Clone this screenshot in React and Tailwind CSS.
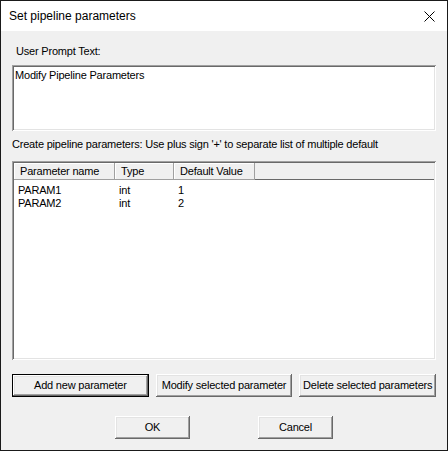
import React from 'react';

const raised =
    'shadow-[inset_-1px_-1px_#696969,inset_1px_1px_#ffffff,inset_-2px_-2px_#a0a0a0,inset_2px_2px_#e3e3e3]';
const sunken =
    'shadow-[inset_1px_1px_#a0a0a0,inset_-1px_-1px_#ffffff,inset_2px_2px_#696969,inset_-2px_-2px_#e3e3e3]';

const Button = ({ children, isDefault, className = '' }) => (
    <div className={`h-[23px] flex items-center justify-center bg-[#f0f0f0] ${className}`}>
        <div
            className={`w-full h-full flex items-center justify-center ${
                isDefault
                    ? 'shadow-[inset_0_0_0_1px_#000000,inset_-2px_-2px_#696969,inset_2px_2px_#ffffff,inset_-3px_-3px_#a0a0a0,inset_3px_3px_#e3e3e3]'
                    : raised
            }`}
        >
            {children}
        </div>
    </div>
);

const columns = [
    { label: 'Parameter name', w: 'w-[101px]' },
    { label: 'Type', w: 'w-[59px]' },
    { label: 'Default Value', w: 'w-[81px]' },
];

const rows = [
    ['PARAM1', 'int', '1'],
    ['PARAM2', 'int', '2'],
];

export default function App() {
    return (
        <div className="w-[448px] h-[451px] border border-[#1a1a1a] bg-[#f0f0f0] flex flex-col font-['Liberation_Sans',Arial,sans-serif] text-[11px] leading-[13px] tracking-[-0.2px] text-black">
            {/* Title bar */}
            <div className="h-[30px] shrink-0 bg-white flex items-center justify-between pl-[8px] pr-[12px] text-[12px] tracking-normal">
                <span>Set pipeline parameters</span>
                <svg width="11" height="11" viewBox="0 0 11 11">
                    <path d="M0.5 0.5 L10.5 10.5 M10.5 0.5 L0.5 10.5" stroke="#000" strokeWidth="1" />
                </svg>
            </div>

            <div className="flex-1 flex flex-col px-[11px]">
                <div className="pt-[14px] pl-[4px] h-[34px]">User Prompt Text:</div>
                <div className={`h-[66px] bg-white pl-[3px] pt-[4px] ${sunken}`}>Modify Pipeline Parameters</div>

                <div className="mt-[7px] whitespace-nowrap">
                    Create pipeline parameters: Use plus sign '+' to separate list of multiple default
                </div>

                {/* List view */}
                <div className={`mt-[10px] h-[199px] bg-white p-[2px] flex flex-col ${sunken}`}>
                    <div className="h-[17px] flex bg-[#f0f0f0] shadow-[inset_0_-1px_#696969]">
                        {columns.map((c) => (
                            <div
                                key={c.label}
                                className={`${c.w} h-full flex items-center pl-[6px] shadow-[inset_-1px_-1px_#a0a0a0,inset_1px_1px_#ffffff]`}
                            >
                                {c.label}
                            </div>
                        ))}
                        <div className="flex-1 h-full" />
                    </div>
                    <div className="pt-[4px] flex flex-col">
                        {rows.map((r) => (
                            <div key={r[0]} className="h-[13px] flex items-center">
                                <div className="w-[101px] pl-[4px]">{r[0]}</div>
                                <div className="w-[59px] pl-[4px]">{r[1]}</div>
                                <div className="w-[81px] pl-[4px]">{r[2]}</div>
                            </div>
                        ))}
                    </div>
                </div>

                <div className="mt-[14px] flex gap-[7px]">
                    <Button isDefault className="flex-1">Add new parameter</Button>
                    <Button className="flex-1">Modify selected parameter</Button>
                    <Button className="flex-1 whitespace-nowrap">Delete selected parameters</Button>
                </div>

                <div className="mt-[19px] flex justify-center gap-[68px]">
                    <Button className="w-[75px]">OK</Button>
                    <Button className="w-[75px]">Cancel</Button>
                </div>
            </div>
        </div>
    );
}
